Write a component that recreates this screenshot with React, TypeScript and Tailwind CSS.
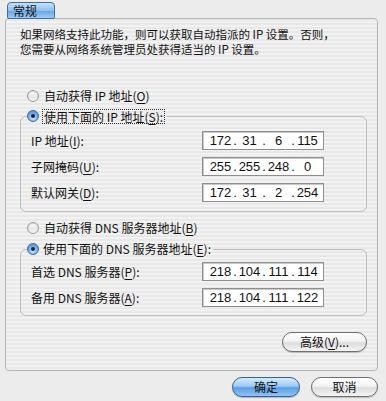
import React from 'react';

const CJK = "font-['Noto_Sans_CJK_SC','Noto_Sans_CJK_JP',sans-serif]";

function Radio({ checked }: { checked?: boolean }) {
  if (checked) {
    return (
      <span className="flex h-[12px] w-[12px] shrink-0 items-center justify-center rounded-full border border-[#3d6aa8] bg-[radial-gradient(circle_at_50%_70%,#d6ecff_0%,#7fb4ec_45%,#3f7fd0_100%)]">
        <span className="h-[4px] w-[4px] rounded-full bg-[#18233d]" />
      </span>
    );
  }
  return (
    <span className="h-[12px] w-[12px] shrink-0 rounded-full border border-[#9a9a9a] bg-[linear-gradient(180deg,#ffffff_0%,#e6e6e6_60%,#f8f8f8_100%)] shadow-[inset_0_1px_1px_rgba(0,0,0,0.15)]" />
  );
}

function Key({ k }: { k: string }) {
  return (
    <>
      (<span className="underline underline-offset-[2px]">{k}</span>)
    </>
  );
}

function IpField({ parts }: { parts: string[] }) {
  return (
    <div className="flex h-[19px] w-[122px] items-center border border-[#8e8e8e] bg-white pl-[6px] font-['Liberation_Sans',sans-serif] text-[13px] text-[#111] shadow-[inset_1px_1px_0_#c8c8c8]">
      {parts.map((p, i) => (
        <React.Fragment key={i}>
          {i > 0 && <span className="w-[6px] text-center">.</span>}
          <span className="w-[23px] text-center">{p}</span>
        </React.Fragment>
      ))}
    </div>
  );
}

function Row({ label, parts }: { label: React.ReactNode; parts: string[] }) {
  return (
    <div className="flex h-[19px] items-center">
      <span className="w-[171px]">{label}</span>
      <IpField parts={parts} />
    </div>
  );
}

function AquaButton({ children, primary, width }: { children: React.ReactNode; primary?: boolean; width: string }) {
  return (
    <button
      className={
        primary
          ? `${width} flex h-[20px] items-center justify-center rounded-full border border-[#3b5f95] bg-[linear-gradient(180deg,#d4ebff_0%,#9ccbf6_45%,#5d9ee6_55%,#8fc4f5_100%)] text-[12px] text-[#111] shadow-[0_1px_1px_rgba(0,0,0,0.25)]`
          : `${width} flex h-[20px] items-center justify-center rounded-full border border-[#6f6f6f] bg-[linear-gradient(180deg,#ffffff_0%,#f3f3f3_45%,#dcdcdc_55%,#f4f4f4_100%)] text-[12px] text-[#111] shadow-[0_1px_1px_rgba(0,0,0,0.2)]`
      }
    >
      {children}
    </button>
  );
}

export default function App() {
  return (
    <div className={`${CJK} h-[401px] w-[386px] bg-[#ececec] pl-[5px] pt-[2px] text-[12px] leading-[14px] text-[#111]`}>
      {/* tab */}
      <div className="relative z-10 ml-[2px] flex h-[17px] w-[48px] items-center rounded-t-[4px] rounded-b-[2px] border border-[#3f6ea8] bg-[linear-gradient(180deg,#c6e0fa_0%,#8fc0ee_50%,#6aa8e6_55%,#9ccbf4_100%)] pl-[5px] text-[12px]">
        常规
      </div>

      {/* panel */}
      <div className="-mt-[1px] h-[353px] w-[373px] rounded-[4px] border border-[#b4b4b4] bg-[repeating-linear-gradient(180deg,#e8e8e8_0px,#e8e8e8_2px,#f2f2f2_2px,#f2f2f2_4px)] pl-[14px] pr-[10px] pt-[8px]">
        <div className="flex flex-col text-[11.5px] leading-[15px]">
          <div className="whitespace-nowrap">如果网络支持此功能，则可以获取自动指派的 IP 设置。否则，</div>
          <div className="whitespace-nowrap">您需要从网络系统管理员处获得适当的 IP 设置。</div>
        </div>

        <div className="ml-[7px] mt-[31px] flex h-[16px] items-center gap-[5px]">
          <Radio />
          <span>
            自动获得 IP 地址<Key k="O" />
          </span>
        </div>

        <fieldset className="mt-[4px] w-[347px] rounded-[6px] border border-[#bdbdbd] pb-[9px] pl-[10px] pt-[7px]">
          <legend className="-ml-[4px] flex h-[16px] items-center gap-[3px] pr-[2px]">
            <Radio checked />
            <span className="border border-dotted border-[#333] px-[1px] leading-[13px]">
              使用下面的 IP 地址<Key k="S" />:
            </span>
          </legend>
          <div className="flex flex-col gap-[7px]">
            <Row label={<>IP 地址<Key k="I" />:</>} parts={['172', '31', '6', '115']} />
            <Row label={<>子网掩码<Key k="U" />:</>} parts={['255', '255', '248', '0']} />
            <Row label={<>默认网关<Key k="D" />:</>} parts={['172', '31', '2', '254']} />
          </div>
        </fieldset>

        <div className="ml-[7px] mt-[8px] flex h-[16px] items-center gap-[5px]">
          <Radio />
          <span>
            自动获得 DNS 服务器地址<Key k="B" />
          </span>
        </div>

        <fieldset className="mt-[5px] w-[347px] rounded-[6px] border border-[#bdbdbd] pb-[8px] pl-[10px] pt-[5px]">
          <legend className="-ml-[4px] flex h-[16px] items-center gap-[4px] pr-[2px]">
            <Radio checked />
            <span>
              使用下面的 DNS 服务器地址<Key k="E" />:
            </span>
          </legend>
          <div className="flex flex-col gap-[7px]">
            <Row label={<>首选 DNS 服务器<Key k="P" />:</>} parts={['218', '104', '111', '114']} />
            <Row label={<>备用 DNS 服务器<Key k="A" />:</>} parts={['218', '104', '111', '122']} />
          </div>
        </fieldset>

        <div className="mt-[16px] flex justify-end">
          <AquaButton width="w-[85px]">
            高级<Key k="V" />...
          </AquaButton>
        </div>
      </div>

      <div className="mt-[6px] flex justify-end gap-[11px] pr-[8px]">
        <AquaButton primary width="w-[68px]">
          确定
        </AquaButton>
        <AquaButton width="w-[67px]">取消</AquaButton>
      </div>
    </div>
  );
}
